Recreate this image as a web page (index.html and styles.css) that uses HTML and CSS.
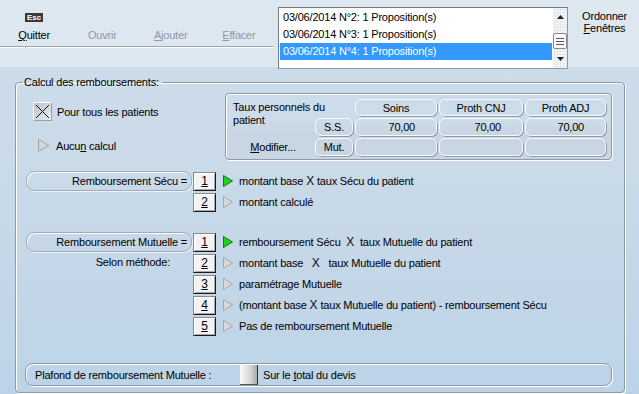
FILE: index.html
```html
<!DOCTYPE html>
<html lang="fr">

<head>
  <meta charset="UTF-8">
  <meta name="viewport" content="width=device-width, initial-scale=1.0">
  <title>Calcul des remboursements</title>
  <link rel="stylesheet" href="styles.css">
</head>

<body>
  <div class="top">
    <div class="toolbar">
      <div class="tool"><span class="key">Esc</span><span class="lbl"><u>Q</u>uitter</span></div>
      <div class="tool off"><span class="lbl">Ouvrir</span></div>
      <div class="tool off"><span class="lbl"><u>A</u>jouter</span></div>
      <div class="tool off"><span class="lbl"><u>E</u>ffacer</span></div>
    </div>
    <div class="listbox">
      <ul class="items">
        <li>03/06/2014 N°2: 1 Proposition(s)</li>
        <li>03/06/2014 N°3: 1 Proposition(s)</li>
        <li class="sel">03/06/2014 N°4: 1 Proposition(s)</li>
      </ul>
      <div class="scroll">
        <div class="sarrow"><svg width="7" height="4" viewBox="0 0 7 4"><polygon points="3.5,0 7,4 0,4" fill="#222"/></svg></div>
        <div class="thumb"><i></i><i></i><i></i></div>
        <div class="sarrow"><svg width="7" height="4" viewBox="0 0 7 4"><polygon points="0,0 7,0 3.5,4" fill="#222"/></svg></div>
      </div>
    </div>
    <div class="windows">Ordonner<br><u>F</u>enêtres</div>
  </div>

  <fieldset class="group">
    <legend>Calcul des remboursements:</legend>

    <div class="calc">
      <div class="opts">
        <div class="opt">
          <svg class="xbox" width="19" height="19" viewBox="0 0 19 19">
            <defs>
              <linearGradient id="xg" x1="0" y1="0" x2="1" y2="1">
                <stop offset="0" stop-color="#b9bec4"/>
                <stop offset="1" stop-color="#eef0f2"/>
              </linearGradient>
            </defs>
            <rect x="0.5" y="0.5" width="18" height="18" fill="url(#xg)" stroke="#9aa0a8"/>
            <path d="M0.5 0.5H18.5M0.5 0.5V18.5" stroke="#fff"/>
            <path d="M3 3L16 16M16 3L3 16" stroke="#111" stroke-width="1"/>
          </svg>
          <span>Pour tous les patients</span>
        </div>
        <div class="opt aucun">
          <svg width="12" height="13" viewBox="0 0 12 13"><polygon points="0.5,0.5 11,6.5 0.5,12.5" fill="#d6d6d6" stroke="#a4a4a4"/></svg>
          <span>Aucu<u>n</u> calcul</span>
        </div>
      </div>

      <div class="taux">
        <div class="tlabel">Taux personnels du<br>patient</div>
        <div class="cell head c3">Soins</div>
        <div class="cell head c4">Proth CNJ</div>
        <div class="cell head c5">Proth ADJ</div>
        <div class="cell btn r2">S.S.</div>
        <div class="cell val">70,00</div>
        <div class="cell val">70,00</div>
        <div class="cell val">70,00</div>
        <div class="modif"><u>M</u>odifier...</div>
        <div class="cell btn">Mut.</div>
        <div class="cell val"></div>
        <div class="cell val"></div>
        <div class="cell val"></div>
      </div>
    </div>

    <div class="rules secu">
      <div class="row">
        <div class="lead pill">Remboursement Sécu =</div>
        <div class="num"><u>1</u></div>
        <svg class="arrow" width="10" height="12" viewBox="0 0 10 12"><polygon points="0.5,0.5 9.5,6 0.5,11.5" fill="#22d022" stroke="#0c7a0c"/></svg>
        <span>montant base <span class="x">X</span> taux Sécu du patient</span>
      </div>
      <div class="row">
        <div class="lead"></div>
        <div class="num"><u>2</u></div>
        <svg class="arrow" width="10" height="12" viewBox="0 0 10 12"><polygon points="0.5,0.5 9.5,6 0.5,11.5" fill="#d8d8d8" stroke="#a8a8a8"/></svg>
        <span>montant calculé</span>
      </div>
    </div>

    <div class="rules mut">
      <div class="row">
        <div class="lead pill">Remboursement Mutuelle =</div>
        <div class="num"><u>1</u></div>
        <svg class="arrow" width="10" height="12" viewBox="0 0 10 12"><polygon points="0.5,0.5 9.5,6 0.5,11.5" fill="#22d022" stroke="#0c7a0c"/></svg>
        <span>remboursement Sécu &nbsp;<span class="x">X</span> &nbsp;taux Mutuelle du patient</span>
      </div>
      <div class="row">
        <div class="lead method">Selon méthode:</div>
        <div class="num"><u>2</u></div>
        <svg class="arrow" width="10" height="12" viewBox="0 0 10 12"><polygon points="0.5,0.5 9.5,6 0.5,11.5" fill="#d8d8d8" stroke="#a8a8a8"/></svg>
        <span>montant base &nbsp;&nbsp;<span class="x">X</span> &nbsp;&nbsp;taux Mutuelle du patient</span>
      </div>
      <div class="row">
        <div class="lead"></div>
        <div class="num"><u>3</u></div>
        <svg class="arrow" width="10" height="12" viewBox="0 0 10 12"><polygon points="0.5,0.5 9.5,6 0.5,11.5" fill="#d8d8d8" stroke="#a8a8a8"/></svg>
        <span>paramétrage Mutuelle</span>
      </div>
      <div class="row">
        <div class="lead"></div>
        <div class="num"><u>4</u></div>
        <svg class="arrow" width="10" height="12" viewBox="0 0 10 12"><polygon points="0.5,0.5 9.5,6 0.5,11.5" fill="#d8d8d8" stroke="#a8a8a8"/></svg>
        <span>(montant base <span class="x">X</span> taux Mutuelle du patient) - remboursement Sécu</span>
      </div>
      <div class="row">
        <div class="lead"></div>
        <div class="num"><u>5</u></div>
        <svg class="arrow" width="10" height="12" viewBox="0 0 10 12"><polygon points="0.5,0.5 9.5,6 0.5,11.5" fill="#d8d8d8" stroke="#a8a8a8"/></svg>
        <span>Pas de remboursement Mutuelle</span>
      </div>
    </div>

    <div class="plafond">
      <span class="plabel">Plafond de remboursement Mutuelle :</span>
      <span class="pbtn"></span>
      <span>Sur le <u>t</u>otal du devis</span>
    </div>
  </fieldset>
</body>

</html>
```

FILE: styles.css
```css
* {
  margin: 0;
  padding: 0;
  box-sizing: border-box;
}

body {
  width: 639px;
  height: 394px;
  overflow: hidden;
  font-family: "Liberation Sans", Arial, sans-serif;
  font-size: 11px;
  letter-spacing: -0.2px;
  color: #000;
  background: linear-gradient(#dde7f0 0, #dde7f0 67px, #cddcea 67px, #c6d8e8 60%, #bcd3e7 100%);
}

/* barre du haut */
.top {
  display: flex;
  height: 76px;
}

.toolbar {
  display: flex;
  width: 273px;
  height: 47px;
  border-bottom: 1px solid #9aa6b2;
  box-shadow: 0 1px 0 #fff;
}

.tool {
  width: 70px;
  display: flex;
  flex-direction: column;
  align-items: center;
  justify-content: flex-end;
  padding-bottom: 4px;
}

.tool .key {
  background: #3a3a3a;
  color: #fff;
  font-size: 8px;
  font-weight: bold;
  line-height: 9px;
  letter-spacing: 0;
  padding: 0 2px;
  margin-bottom: 7px;
}

.tool .lbl {
  line-height: 13px;
}

.tool.off {
  color: #8d9aa6;
}

.listbox {
  display: flex;
  margin: 7px 0 0 5px;
  width: 290px;
  height: 62px;
  background: #fff;
  border: 1px solid #8c98a4;
  border-top-color: #6f7b87;
  border-left-color: #6f7b87;
}

.items {
  list-style: none;
  width: 272px;
  margin: 1px 1px 0 1px;
}

.items li {
  height: 17px;
  line-height: 17px;
  padding-left: 3px;
}

.items li.sel {
  background: #3399ff;
  color: #fff;
}

.scroll {
  width: 14px;
  background-color: #eef2f6;
  background-image: radial-gradient(#d3dbe3 0.6px, transparent 0.8px);
  background-size: 3px 3px;
  display: flex;
  flex-direction: column;
}

.sarrow {
  height: 18px;
  display: flex;
  align-items: center;
  justify-content: center;
}

.sarrow:last-child {
  margin-top: auto;
}

.thumb {
  margin-top: 7px;
  height: 16px;
  background: #f8f8f8;
  border: 1px solid #8a8a8a;
  border-radius: 2px;
  display: flex;
  flex-direction: column;
  justify-content: center;
  gap: 2px;
  padding: 0 2px;
}

.thumb i {
  display: block;
  height: 1px;
  background: #555;
}

.windows {
  flex: 1;
  margin-top: 10px;
  text-align: center;
  line-height: 12px;
  padding-left: 2px;
}

/* cadre principal */
.group {
  margin-left: 15px;
  width: 610px;
  height: 317px;
  border: 1px solid #8e9aa6;
  border-radius: 4px;
  box-shadow: 1px 1px 0 #fff, inset 1px 1px 0 #fff;
  padding: 4px 10px 6px 9px;
}

.group legend {
  margin-left: -2px;
  padding: 0 3px 0 1px;
  line-height: 13px;
}

.calc {
  display: flex;
  height: 67px;
}

.opts {
  width: 200px;
  padding: 9px 0 0 8px;
}

.opt {
  display: flex;
  align-items: center;
  gap: 5px;
  height: 19px;
}

.opt.aucun {
  margin-top: 15px;
  padding-left: 5px;
  gap: 6px;
}

.taux {
  width: 387px;
  height: 67px;
  border: 1px solid #8e9aa6;
  border-radius: 4px;
  box-shadow: 1px 1px 0 #fff, inset 1px 1px 0 #fff;
  background: linear-gradient(#cddcea 40%, #c7d6e2 60%);
  padding: 5px 5px 3px 7px;
  display: grid;
  grid-template-columns: 80px 38px 82px 84px 81px;
  grid-template-rows: 17px 18px 18px;
  gap: 2px;
}

.tlabel {
  grid-column: 1 / 3;
  grid-row: 1 / 3;
  line-height: 13px;
  padding-top: 2px;
}

.cell {
  border: 1px solid #f7fafc;
  border-radius: 6px;
  box-shadow: 1px 1px 0 #8e9caa;
  display: flex;
  align-items: center;
}

.head {
  justify-content: center;
}

.c3 {
  grid-column: 3;
}

.c4 {
  grid-column: 4;
}

.c5 {
  grid-column: 5;
}

.btn {
  justify-content: center;
  grid-column: 2;
}

.r2 {
  grid-row: 2;
}

.val {
  justify-content: flex-end;
  padding-right: 21px;
}

.modif {
  grid-column: 1;
  display: flex;
  align-items: center;
  justify-content: center;
}

/* lignes de règles */
.rules {
  padding-left: 1px;
}

.secu {
  margin-top: 11px;
}

.mut {
  margin-top: 20px;
}

.row {
  display: flex;
  align-items: center;
  height: 20px;
  margin-bottom: 1px;
}

.lead {
  width: 166px;
  height: 20px;
  margin-right: 1px;
  text-align: right;
  padding-right: 4px;
  line-height: 18px;
}

.pill {
  border: 1px solid #9eabb8;
  border-radius: 9px;
  box-shadow: inset 1px 1px 0 #fff, 1px 1px 0 #eef3f7;
}

.method {
  padding-right: 22px;
}

.num {
  width: 23px;
  height: 19px;
  background: #f3f2f5;
  border: 1px solid #8a8a8a;
  border-right-color: #1a1a1a;
  border-bottom-color: #1a1a1a;
  box-shadow: inset 1px 1px 0 #fff, inset -1px -1px 0 #a8a8a8;
  text-align: center;
  font-size: 12px;
  line-height: 17px;
}

.arrow {
  margin: 0 6px 0 7px;
  flex: none;
}

.x {
  font-size: 12px;
  letter-spacing: 0;
  color: #111;
}

/* plafond */
.plafond {
  margin-top: 27px;
  width: 587px;
  height: 23px;
  border: 1px solid #8e9aa6;
  border-radius: 8px;
  box-shadow: 1px 1px 0 #fff, inset 1px 1px 0 #fff;
  display: flex;
  align-items: center;
  padding-left: 9px;
}

.plabel {
  width: 205px;
}

.pbtn {
  width: 18px;
  height: 20px;
  margin-right: 5px;
  background: linear-gradient(90deg, #fbfbfb, #d6d6d6 60%, #a9a9a9);
  border-right: 1px solid #333;
  border-bottom: 1px solid #555;
}
```
